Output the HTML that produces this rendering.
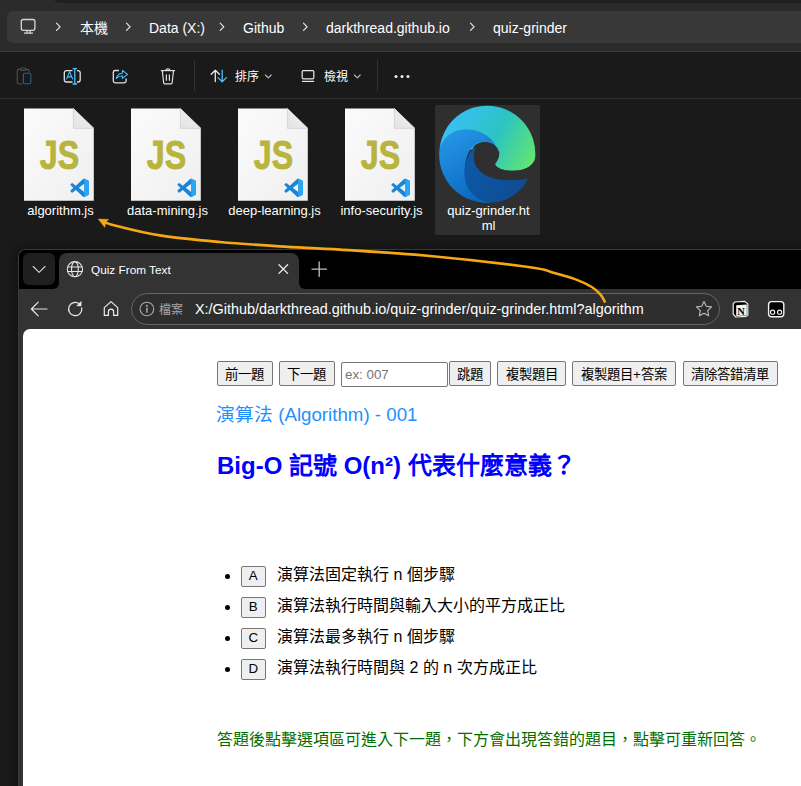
<!DOCTYPE html>
<html lang="zh-TW"><head><meta charset="utf-8">
<style>
*{margin:0;padding:0;box-sizing:border-box}
html,body{width:801px;height:786px;overflow:hidden;background:#1a1a1a;font-family:"Liberation Sans",sans-serif;position:relative}
.a{position:absolute}
#hdr{left:0;top:0;width:801px;height:51px;background:#2b2b2b}
#toptab{left:54px;top:-10px;width:760px;height:12.6px;background:#1f1f1f;border-radius:0 0 0 5px}
#crumb{left:7px;top:11px;width:820px;height:32px;background:#383838;border-radius:6px}
#sep1{left:0;top:51px;width:801px;height:1px;background:#3d3d3d}
#tb{left:0;top:52px;width:801px;height:46px;background:#1a1a1a}
#sep2{left:0;top:98px;width:801px;height:1px;background:#2e2e2e}
.ct{color:#fff;font-size:14px;top:19.5px;line-height:16px;white-space:nowrap}
.tt{color:#fff;font-size:12px;top:69px;line-height:16px;white-space:nowrap}
.vs{width:1px;background:#333}
.fl{color:#fff;font-size:13px;line-height:15px;text-align:center;white-space:nowrap}
</style></head><body>
<div id="hdr" class="a"></div>
<div id="toptab" class="a"></div>
<div id="crumb" class="a"></div>
<div id="sep1" class="a"></div>
<div id="tb" class="a"></div>
<div id="sep2" class="a"></div>

<!-- breadcrumb -->
<svg class="a" style="left:0;top:0" width="801" height="51">
  <g fill="none" stroke="#d6d6d6" stroke-width="1.3">
    <rect x="21.3" y="19.5" width="13.6" height="10.8" rx="2"/>
    <path d="M24 33.2h9M27 31v2M30 31v2"/>
  </g>
  <g fill="none" stroke="#e8e8e8" stroke-width="1.2" stroke-linecap="round" stroke-linejoin="round">
    <path d="M56.5 23.2l3.6 3.6-3.6 3.6"/>
    <path d="M126.5 23.2l3.6 3.6-3.6 3.6"/>
    <path d="M220.2 23.2l3.6 3.6-3.6 3.6"/>
    <path d="M303.5 23.2l3.6 3.6-3.6 3.6"/>
    <path d="M470.5 23.2l3.6 3.6-3.6 3.6"/>
  </g>
</svg>
<div class="a ct" style="left:80px">本機</div>
<div class="a ct" style="left:149px">Data (X:)</div>
<div class="a ct" style="left:243px">Github</div>
<div class="a ct" style="left:326px">darkthread.github.io</div>
<div class="a ct" style="left:493px">quiz-grinder</div>

<!-- toolbar -->
<svg class="a" style="left:0;top:0" width="801" height="100">
  <!-- paste disabled -->
  <g fill="none" stroke-width="1.1">
    <path d="M22.5 84H18.8a1.6 1.6 0 0 1-1.6-1.6V71a1.6 1.6 0 0 1 1.6-1.6h1.4M25.8 69.4h1.6a1.6 1.6 0 0 1 1.6 1.6v1.6" stroke="#505050"/>
    <rect x="20.4" y="68" width="5.4" height="2.4" rx="1.2" stroke="#505050"/>
    <rect x="23.4" y="73.2" width="7.4" height="10.6" rx="1.4" stroke="#2a6088"/>
  </g>
  <!-- rename -->
  <g fill="none" stroke-width="1.3">
    <path d="M72.5 70.6H66.5a2.2 2.2 0 0 0-2.2 2.2v7a2.2 2.2 0 0 0 2.2 2.2h6M77 70.6h1a2.2 2.2 0 0 1 2.2 2.2v7a2.2 2.2 0 0 1-2.2 2.2h-1" stroke="#e0e0e0"/>
    <path d="M74.8 68.6v15.4M72.6 68.6h4.4M72.6 84h4.4" stroke="#4cc2ff"/>
    <path d="M66.4 79.4l3.2-7.8 3.2 7.8M67.5 76.9h4.2" stroke="#4cc2ff" stroke-width="1.1"/>
  </g>
  <!-- share -->
  <g fill="none" stroke-width="1.3" stroke-linejoin="round" stroke-linecap="round">
    <path d="M118.5 70.5h-3.4a1.8 1.8 0 0 0-1.8 1.8v8.7a1.8 1.8 0 0 0 1.8 1.8h9.2a1.8 1.8 0 0 0 1.8-1.8v-2" stroke="#e0e0e0"/>
    <path d="M116.2 78.4c1-3.6 3.2-5.2 6.2-5.2v-2.8l5.1 4-5.1 4v-2.6c-2.4 0-4.3 0.8-6.2 2.6z" stroke="#4cc2ff" stroke-width="1.1"/>
  </g>
  <!-- trash -->
  <g fill="none" stroke="#e0e0e0" stroke-width="1.2" stroke-linejoin="round">
    <path d="M160.8 70.6h14.2"/>
    <path d="M165.6 70.4a2.4 2 0 0 1 4.6 0"/>
    <path d="M162.3 70.8l1.4 12.2a1 1 0 0 0 1 0.9h6.4a1 1 0 0 0 1-0.9l1.4-12.2"/>
    <path d="M166.4 74.4v6.4M169.4 74.4v6.4"/>
  </g>
  <!-- sort -->
  <g fill="none" stroke-width="1.3" stroke-linecap="round" stroke-linejoin="round">
    <path d="M215.3 81.6V70.2M211.2 74.3l4.1-4.1 4.1 4.1" stroke="#e8e8e8"/>
    <path d="M222.2 70.2V81.8M218 77.6l4.2 4.2 4.2-4.2" stroke="#4cc2ff"/>
  </g>
  <path d="M265.4 75l2.9 2.9 2.9-2.9" fill="none" stroke="#bdbdbd" stroke-width="1.1" stroke-linecap="round" stroke-linejoin="round"/>
  <!-- view -->
  <g fill="none" stroke="#e8e8e8" stroke-width="1.2">
    <rect x="302.2" y="70.6" width="11.6" height="8.2" rx="1"/>
    <path d="M302 81.4h12.2"/>
  </g>
  <path d="M354.4 75l2.9 2.9 2.9-2.9" fill="none" stroke="#bdbdbd" stroke-width="1.1" stroke-linecap="round" stroke-linejoin="round"/>
  <g fill="#f0f0f0"><circle cx="396" cy="76.6" r="1.5"/><circle cx="402" cy="76.6" r="1.5"/><circle cx="408" cy="76.6" r="1.5"/></g>
</svg>
<div class="a vs" style="left:194px;top:60px;height:31px"></div>
<div class="a vs" style="left:377px;top:60px;height:31px"></div>
<div class="a tt" style="left:235px">排序</div>
<div class="a tt" style="left:324px">檢視</div>

<!-- file icons -->
<div class="a" style="left:435px;top:105px;width:105px;height:130px;background:#2f2f2f;border-radius:2px"></div>
<svg class="a" style="left:0;top:100px" width="801" height="140">
  <defs>
    <linearGradient id="pg" x1="0" y1="0" x2="1" y2="1">
      <stop offset="0" stop-color="#fbfbfb"/><stop offset="1" stop-color="#efeff0"/>
    </linearGradient>
    <linearGradient id="fold" x1="0" y1="1" x2="1" y2="0">
      <stop offset="0" stop-color="#e4e4e4"/><stop offset="1" stop-color="#f0f0f0"/>
    </linearGradient>
    <g id="js">
      <path d="M0 8.5H49.4L69.8 28.3V100.7H0Z" fill="url(#pg)"/>
      <path d="M49.4 8.5V28.3H69.8Z" fill="url(#fold)" stroke="#cfcfcf" stroke-width="0.8"/>
      <text x="15.8" y="69.4" font-family="Liberation Sans" font-weight="bold" font-size="40.5" fill="#b8b43c" stroke="#b8b43c" stroke-width="0.9" textLength="39.4" lengthAdjust="spacingAndGlyphs">JS</text>
      <g transform="translate(46.4 78.6) scale(0.185)">
        <path fill-rule="evenodd" d="M70.9 99.3a6.2 6.2 0 0 0 4.9-.2l20.6-9.9a6.2 6.2 0 0 0 3.5-5.6V16.4a6.2 6.2 0 0 0-3.5-5.6L75.8.9a6.2 6.2 0 0 0-7.1 1.2L29.4 38 12.2 25a4.2 4.2 0 0 0-5.3.2L1.4 30.2a4.2 4.2 0 0 0 0 6.2L16.3 50 1.4 63.6a4.2 4.2 0 0 0 0 6.2l5.5 5a4.2 4.2 0 0 0 5.3.2l17.2-13 39.4 35.9a6.2 6.2 0 0 0 2.2 1.4zM75 27.3 45.1 50 75 72.7z" fill="#1a84d6"/>
        <path fill-rule="evenodd" d="M70.9 99.3a6.2 6.2 0 0 0 4.9-.2l20.6-9.9a6.2 6.2 0 0 0 3.5-5.6V16.4a6.2 6.2 0 0 0-3.5-5.6L75.8.9a6.2 6.2 0 0 0-7.1 1.2L75 6.3V93.7z" fill="#2ba6f3"/>
      </g>
    </g>
  </defs>
  <use href="#js" x="24" y="0"/>
  <use href="#js" x="131" y="0"/>
  <use href="#js" x="238" y="0"/>
  <use href="#js" x="345" y="0"/>
</svg>
<div class="a fl" style="left:10.5px;top:202.5px;width:100px">algorithm.js</div>
<div class="a fl" style="left:117.5px;top:202.5px;width:100px">data-mining.js</div>
<div class="a fl" style="left:224.5px;top:202.5px;width:100px">deep-learning.js</div>
<div class="a fl" style="left:331.5px;top:202.5px;width:100px">info-security.js</div>
<div class="a fl" style="left:438.5px;top:202.5px;width:100px">quiz-grinder.ht<br>ml</div>
<svg class="a" style="left:0;top:0" width="801" height="240">
  <defs>
    <linearGradient id="eg" gradientUnits="userSpaceOnUse" x1="450" y1="120" x2="535" y2="165">
      <stop offset="0" stop-color="#38c0f4"/><stop offset="0.5" stop-color="#2cc3c4"/><stop offset="1" stop-color="#66e86a"/>
    </linearGradient>
    <linearGradient id="es" gradientUnits="userSpaceOnUse" x1="445" y1="140" x2="480" y2="200">
      <stop offset="0" stop-color="#2393e4"/><stop offset="1" stop-color="#0a66c0"/>
    </linearGradient>
    <linearGradient id="ew" gradientUnits="userSpaceOnUse" x1="470" y1="160" x2="520" y2="195">
      <stop offset="0" stop-color="#0d58a8"/><stop offset="1" stop-color="#0f4c92"/>
    </linearGradient>
  </defs>
  <path d="M439.7 147.6A48 48 0 0 1 535.2 157C534.5 165 526 170.8 514 170.8C504 170.8 497 168.5 495 164.5L480 150Z" fill="url(#eg)"/>
  <path d="M466 162L474 146C480 140 495 139 499.2 152C499.8 158 497 161.5 495 164.5C497 169 505 171 514 170.8C524 170.5 530 167 533 163L537 170L529 186L470 186Z" fill="#2f2f2f"/>
  <path d="M439.7 147.6C446 133 457 129 468.4 129.4C482 130 494.5 138 498.8 152.5C497.5 144.5 490 141.5 483 141.8C470 143 464 158 465 175C466 190 478 201 492 202.6A48 48 0 0 1 439.7 147.6Z" fill="url(#es)"/>
  <path d="M476.5 146.5C471 154 472.5 168 486 175.5C497 181 515 181.5 528 178.5C522 192 507 202 492 202.6C476 202 464.5 189 464.5 174C464.5 162 469 151 476.5 146.5Z" fill="url(#ew)"/>
</svg>

<!-- browser window -->
<div class="a" style="left:18px;top:249px;width:800px;height:560px;background:#333;border-top:1px solid #3a3a3a;border-left:1px solid #3a3a3a;border-radius:8px 0 0 0;box-shadow:0 0 14px rgba(0,0,0,0.45)"></div>
<div class="a" style="left:19px;top:250px;width:790px;height:20px;background:#000;border-radius:7px 0 0 0"></div>
<div class="a" style="left:19px;top:250px;width:40px;height:39px;background:#000;border-radius:7px 0 6px 0"></div>
<div class="a" style="left:299px;top:250px;width:510px;height:39px;background:#000;border-radius:0 0 0 6px"></div>
<div class="a" style="left:59px;top:253px;width:240px;height:40px;background:#333;border-radius:8px 8px 0 0"></div>
<div class="a" style="left:23px;top:253px;width:32px;height:32px;background:#1f1f1f;border-radius:6px"></div>
<div class="a" style="left:131px;top:293px;width:589px;height:32px;border:1px solid #656565;border-radius:16px;background:#2e2e2e"></div>
<div class="a" style="left:23px;top:328.5px;width:790px;height:470px;background:#fff;border-radius:7px 0 0 0"></div>
<div class="a" style="left:91px;top:261.5px;color:#fff;font-size:11.8px;line-height:16px;white-space:nowrap">Quiz From Text</div>
<div class="a" style="left:159px;top:301.5px;color:#a8a8a8;font-size:12px;line-height:16px;white-space:nowrap">檔案</div>
<div class="a" style="left:195px;top:301px;color:#fff;font-size:14.4px;line-height:17px;white-space:nowrap">X:/Github/darkthread.github.io/quiz-grinder/quiz-grinder.html?algorithm</div>
<svg class="a" style="left:0;top:240px" width="801" height="100">
  <g transform="translate(0 -240)" fill="none" stroke-linecap="round" stroke-linejoin="round">
    <path d="M33.2 266.5l5.9 5.9 5.9-5.9" stroke="#d4d4d4" stroke-width="1.1"/>
    <g stroke="#e6e6e6" stroke-width="1.1">
      <circle cx="74.9" cy="269.2" r="7.6"/>
      <ellipse cx="74.9" cy="269.2" rx="3.4" ry="7.6"/>
      <path d="M67.6 267h14.6M67.6 271.5h14.6"/>
    </g>
    <path d="M279 264.8l8.6 8.6M287.6 264.8l-8.6 8.6" stroke="#f0f0f0" stroke-width="1.3"/>
    <path d="M319.2 262v14.4M312 269.2h14.4" stroke="#c0c0c0" stroke-width="1.3"/>
    <!-- back -->
    <path d="M31.5 309h15.5M38.2 302.2l-6.8 6.8 6.8 6.8" stroke="#e6e6e6" stroke-width="1.2"/>
    <!-- refresh -->
    <path d="M81.7 307.9A6.6 6.6 0 1 1 79.3 303.9" stroke="#ececec" stroke-width="1.2"/>
    <path d="M77.3 305.7H81V302Z" fill="#ececec" stroke="#ececec" stroke-width="0.9"/>
    <!-- home -->
    <path d="M104.3 315.4V307.6L111 301.6L117.7 307.6V315.4H113.6V311.8A2.6 2.6 0 0 0 108.4 311.8V315.4Z" stroke="#ececec" stroke-width="1.2"/>
    <!-- info -->
    <circle cx="146.9" cy="309" r="6.8" stroke="#a8a8a8" stroke-width="1.1"/>
    <path d="M146.9 308.2v4" stroke="#a8a8a8" stroke-width="1.5"/>
    <circle cx="146.9" cy="305.8" r="0.5" stroke="#a8a8a8" stroke-width="1.1"/>
    <!-- star -->
    <path d="M704 301.5l2.3 4.7 5.2.7-3.8 3.7.9 5.1-4.6-2.4-4.6 2.4.9-5.1-3.8-3.7 5.2-.7z" stroke="#bdbdbd" stroke-width="1.1"/>
    <!-- notion -->
    <path d="M735 302l9.8-.6 3 2.5v11.2l-1.6 1.3-10.4.6-2.6-2.8V303.6z" fill="#000" stroke="#f0f0f0" stroke-width="1.2"/>
    <path d="M736.2 305.2l10.6-.7v10.9l-10.6.7z" fill="#f4f4f4" stroke="none"/>
    <!-- extension -->
    <rect x="768.6" y="301.6" width="15.2" height="15.2" rx="3" fill="#000" stroke="#f4f4f4" stroke-width="1.4"/>
  </g>
  <g transform="translate(0 -240)">
    <text x="737.2" y="314.6" font-family="Liberation Serif" font-weight="bold" font-size="10.5" fill="#000">N</text>
    <circle cx="772.6" cy="312.2" r="2.1" fill="none" stroke="#f4f4f4" stroke-width="1.1"/><circle cx="779.6" cy="312.2" r="2.1" fill="none" stroke="#f4f4f4" stroke-width="1.1"/>
  </g>
</svg>

<!-- page content -->
<style>
.btn{position:absolute;height:24.5px;background:#efefef;border:1px solid #767676;border-radius:2px;color:#000;font-size:13.33px;line-height:22px;padding-top:1.5px;text-align:center;white-space:nowrap}
.ob{position:absolute;left:241px;width:24.6px;height:20.5px;background:#efefef;border:1px solid #767676;border-radius:2px;color:#000;font-size:13.33px;line-height:18.5px;text-align:center}
.bul{position:absolute;left:225.2px;width:5px;height:5px;border-radius:50%;background:#000}
.ot{position:absolute;left:277px;color:#000;font-size:16px;line-height:18px;white-space:nowrap}
</style>
<div class="btn" style="left:217px;top:361px;width:55.7px">前一題</div>
<div class="btn" style="left:279px;top:361px;width:55.7px">下一題</div>
<div class="a" style="left:341px;top:362px;width:107px;height:24.5px;border:1px solid #767676;border-radius:2px;background:#fff"></div>
<div class="a" style="left:345px;top:366.5px;color:#757575;font-size:13.33px;line-height:16px;white-space:nowrap">ex: 007</div>
<div class="btn" style="left:448.5px;top:361px;width:42.3px">跳題</div>
<div class="btn" style="left:497.3px;top:361px;width:68.6px">複製題目</div>
<div class="btn" style="left:572.1px;top:361px;width:103.6px">複製題目+答案</div>
<div class="btn" style="left:682.6px;top:361px;width:95.6px">清除答錯清單</div>
<div class="a" style="left:216px;top:404px;color:#1e90ff;font-size:18.72px;line-height:22px;white-space:nowrap">演算法 (Algorithm) - 001</div>
<div class="a" style="left:217px;top:452px;color:#0000ff;font-size:24px;font-weight:bold;line-height:28px;white-space:nowrap">Big-O 記號 O(n²) 代表什麼意義？</div>
<div class="bul" style="top:574px"></div>
<div class="bul" style="top:605px"></div>
<div class="bul" style="top:636px"></div>
<div class="bul" style="top:667px"></div>
<div class="ob" style="top:566.3px">A</div>
<div class="ob" style="top:597.2px">B</div>
<div class="ob" style="top:628.1px">C</div>
<div class="ob" style="top:659px">D</div>
<div class="ot" style="top:566px">演算法固定執行 n 個步驟</div>
<div class="ot" style="top:597px">演算法執行時間與輸入大小的平方成正比</div>
<div class="ot" style="top:628px">演算法最多執行 n 個步驟</div>
<div class="ot" style="top:659px">演算法執行時間與 2 的 n 次方成正比</div>
<div class="a" style="left:217px;top:730px;color:#006e00;font-size:16px;line-height:20px;white-space:nowrap">答題後點擊選項區可進入下一題，下方會出現答錯的題目，點擊可重新回答。</div>

<svg class="a" style="left:0;top:0" width="801" height="786">
  <path d="M604.7 301.6 C604.1 300.5 602.9 297.2 600.8 294.8 C598.6 292.4 596.1 289.6 591.8 287.0 C587.5 284.4 581.5 281.5 575.0 279.1 C568.5 276.7 560.0 274.4 552.5 272.4 C545.0 270.4 550.4 269.9 530.0 267.2 C509.6 264.5 461.7 258.9 430.0 256.0 C398.3 253.1 365.1 251.2 340.0 249.6 C314.9 248.0 299.6 247.7 279.6 246.4 C259.6 245.1 239.8 243.8 219.8 242.0 C199.9 240.2 177.4 238.2 159.9 235.4 C142.4 232.7 124.3 227.8 115.0 225.5 C105.7 223.2 105.8 222.4 104.0 221.8" fill="none" stroke="#f6a712" stroke-width="2.6" stroke-linecap="round"/>
  <path d="M98.3 219.1L108.6 219.4L105.6 222.4L104.8 227.4Z" fill="#f6a712" stroke="#f6a712" stroke-width="0.5" stroke-linejoin="round"/>
</svg>

</body></html>
